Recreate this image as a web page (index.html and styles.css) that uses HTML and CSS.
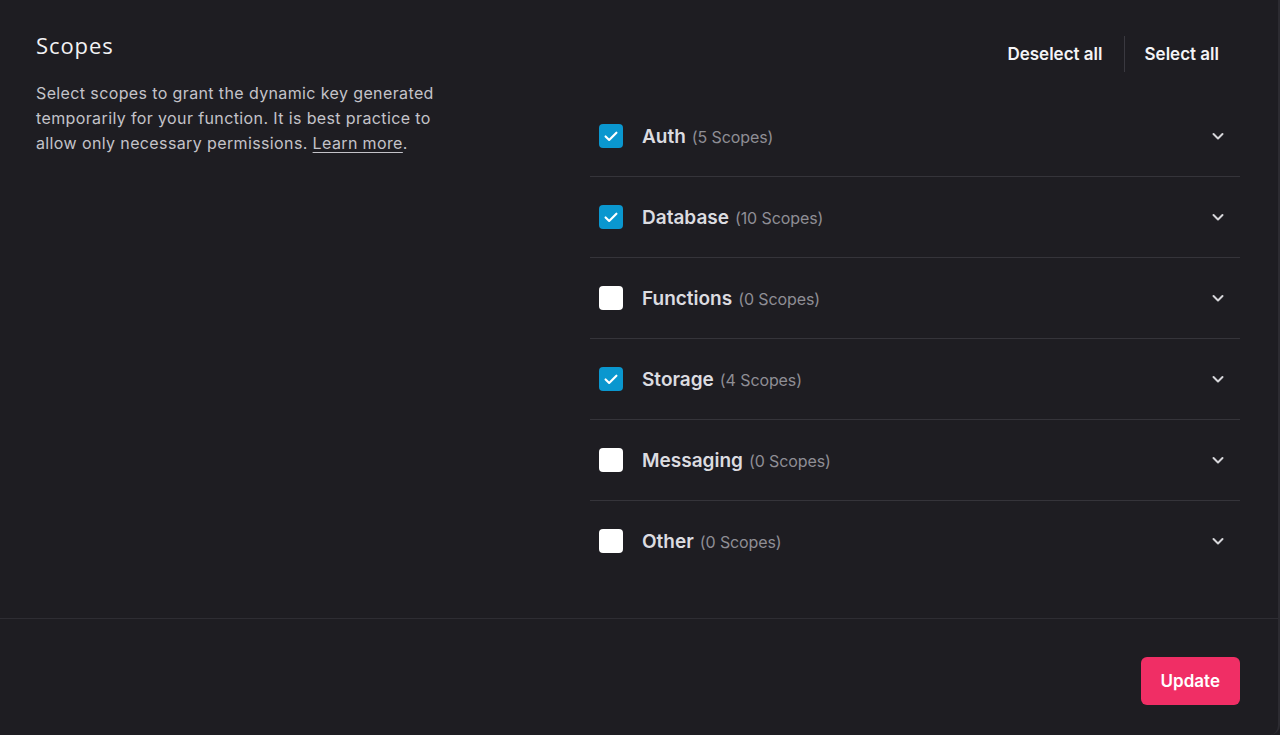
FILE: index.html
```html
<!DOCTYPE html>
<html lang="en">
<head>
<meta charset="utf-8">
<title>Scopes</title>
<link rel="stylesheet" href="styles.css">
</head>
<body>
<div class="card">
  <section class="main">
    <div class="intro">
      <h2 class="title">Scopes</h2>
      <p class="desc">Select scopes to grant the dynamic key generated temporarily for your function. It is best practice to allow only necessary permissions. <a href="#" class="link">Learn more</a>.</p>
    </div>
    <div class="scopes">
      <div class="actions">
        <button class="action">Deselect all</button>
        <span class="sep"></span>
        <button class="action">Select all</button>
      </div>
      <ul class="list">
        <li class="row">
          <span class="check on"><svg viewBox="0 0 24 24" width="20" height="20"><path d="M5.5 12.5l4.3 4.2L18.5 8" fill="none" stroke="#fff" stroke-width="2.6" stroke-linecap="round" stroke-linejoin="round"/></svg></span>
          <span class="name">Auth</span><span class="count">(5 Scopes)</span>
          <svg class="chev" viewBox="0 0 16 16" width="16" height="16"><path d="M3.5 6l4.5 4.5L12.5 6" fill="none" stroke="#d6d6da" stroke-width="2" stroke-linecap="round" stroke-linejoin="round"/></svg>
        </li>
        <li class="row">
          <span class="check on"><svg viewBox="0 0 24 24" width="20" height="20"><path d="M5.5 12.5l4.3 4.2L18.5 8" fill="none" stroke="#fff" stroke-width="2.6" stroke-linecap="round" stroke-linejoin="round"/></svg></span>
          <span class="name">Database</span><span class="count">(10 Scopes)</span>
          <svg class="chev" viewBox="0 0 16 16" width="16" height="16"><path d="M3.5 6l4.5 4.5L12.5 6" fill="none" stroke="#d6d6da" stroke-width="2" stroke-linecap="round" stroke-linejoin="round"/></svg>
        </li>
        <li class="row">
          <span class="check"></span>
          <span class="name">Functions</span><span class="count">(0 Scopes)</span>
          <svg class="chev" viewBox="0 0 16 16" width="16" height="16"><path d="M3.5 6l4.5 4.5L12.5 6" fill="none" stroke="#d6d6da" stroke-width="2" stroke-linecap="round" stroke-linejoin="round"/></svg>
        </li>
        <li class="row">
          <span class="check on"><svg viewBox="0 0 24 24" width="20" height="20"><path d="M5.5 12.5l4.3 4.2L18.5 8" fill="none" stroke="#fff" stroke-width="2.6" stroke-linecap="round" stroke-linejoin="round"/></svg></span>
          <span class="name">Storage</span><span class="count">(4 Scopes)</span>
          <svg class="chev" viewBox="0 0 16 16" width="16" height="16"><path d="M3.5 6l4.5 4.5L12.5 6" fill="none" stroke="#d6d6da" stroke-width="2" stroke-linecap="round" stroke-linejoin="round"/></svg>
        </li>
        <li class="row">
          <span class="check"></span>
          <span class="name">Messaging</span><span class="count">(0 Scopes)</span>
          <svg class="chev" viewBox="0 0 16 16" width="16" height="16"><path d="M3.5 6l4.5 4.5L12.5 6" fill="none" stroke="#d6d6da" stroke-width="2" stroke-linecap="round" stroke-linejoin="round"/></svg>
        </li>
        <li class="row">
          <span class="check"></span>
          <span class="name">Other</span><span class="count">(0 Scopes)</span>
          <svg class="chev" viewBox="0 0 16 16" width="16" height="16"><path d="M3.5 6l4.5 4.5L12.5 6" fill="none" stroke="#d6d6da" stroke-width="2" stroke-linecap="round" stroke-linejoin="round"/></svg>
        </li>
      </ul>
    </div>
  </section>
  <footer class="footer">
    <button class="update">Update</button>
  </footer>
</div>
</body>
</html>
```

FILE: styles.css
```css
* { box-sizing: border-box; }
html, body { margin: 0; padding: 0; }
body {
  background: #1e1d22;
  font-family: Inter, "Noto Sans", "Liberation Sans", sans-serif;
  color: #e4e4e7;
  width: 1280px;
  height: 735px;
  overflow: hidden;
}
.card {
  width: 1280px;
  height: 735px;
  border-right: 2px solid #2c2b31;
  border-bottom-right-radius: 10px;
  display: flex;
  flex-direction: column;
}
.main {
  display: grid;
  grid-template-columns: 1fr 650px;
  padding: 31px 38px 37px 36px;
  border-bottom: 1px solid #2e2d33;
}
.title {
  margin: 0;
  font-family: "Open Sans", Inter, sans-serif;
  font-weight: 500;
  font-size: 22px;
  line-height: 28px;
  color: #f2f2f4;
  letter-spacing: 0.9px;
}
.desc {
  margin: 22px 0 0;
  width: 430px;
  font-size: 16px;
  line-height: 25px;
  color: #c4c3c9;
  letter-spacing: 0.38px;
}
.link {
  color: #c4c3c9;
  text-decoration: underline;
  text-underline-offset: 3px;
}
.actions {
  display: flex;
  justify-content: flex-end;
  align-items: center;
  height: 36px;
  margin-top: 5px;
}
.action {
  background: none;
  border: 0;
  padding: 0 21px 0 20px;
  font-family: Inter, sans-serif;
  font-weight: 600;
  font-size: 17px;
  color: #f4f4f6;
  line-height: 36px;
}
.sep {
  width: 1px;
  height: 36px;
  background: #3a3940;
}
.list {
  list-style: none;
  margin: 24px 0 0;
  padding: 0;
}
.row {
  display: flex;
  align-items: center;
  height: 81px;
  padding: 0 14px 0 9px;
  border-bottom: 1px solid #35343a;
}
.row:last-child {
  border-bottom: 0;
  height: 80px;
}
.check {
  width: 24px;
  height: 24px;
  border-radius: 4px;
  background: #ffffff;
  display: flex;
  align-items: center;
  justify-content: center;
  margin-right: 19px;
  flex: none;
}
.check.on { background: #0a97cf; }
.name {
  font-weight: 600;
  font-size: 19px;
  color: #dcdce0;
  margin-right: 6px;
}
.count {
  font-size: 16px;
  color: #8f8e95;
  letter-spacing: -0.1px;
  margin-top: 2px;
}
.chev { margin-left: auto; }
.footer {
  display: flex;
  justify-content: flex-end;
  padding: 38px 38px 0 0;
}
.update {
  height: 48px;
  padding: 0 20px;
  border: 0;
  border-radius: 6px;
  background: #f02e65;
  color: #ffffff;
  font-family: Inter, sans-serif;
  font-weight: 600;
  font-size: 17px;
}
```
